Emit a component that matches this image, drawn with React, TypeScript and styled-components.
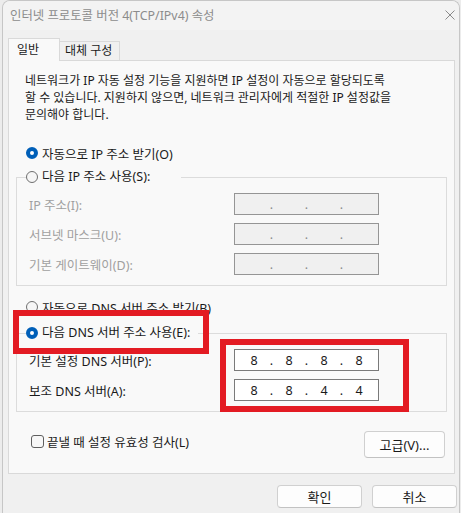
import React from 'react';
import styled, { createGlobalStyle } from 'styled-components';

const GlobalStyle = createGlobalStyle`
  html, body {
    margin: 0;
    padding: 0;
  }
  body {
    background: #ececec;
    font-family: "Noto Sans", "Noto Sans CJK KR", sans-serif;
    font-size: 12px;
    color: #1a1a1a;
  }
  * {
    box-sizing: border-box;
  }
`;

const Window = styled.div`
  margin-left: 2px;
  width: 458px;
  height: 513px;
  background: #f0f0f0;
  border: 1px solid #c6c6c6;
  border-bottom: none;
  border-radius: 8px 8px 0 0;
  overflow: hidden;
`;

const TitleBar = styled.div`
  height: 29px;
  display: flex;
  align-items: center;
  justify-content: space-between;
  padding: 0 4px 2px 7px;
  background: #f3f3f3;
  color: #8c8c8c;
  font-size: 12.4px;
  white-space: nowrap;
`;

const Body = styled.div`
  padding: 8px 4px 0 5px;
`;

const TabStrip = styled.div`
  display: flex;
  align-items: flex-end;
`;

const Tab = styled.div<{ $active?: boolean }>`
  position: relative;
  z-index: 1;
  height: ${p => (p.$active ? '23px' : '19px')};
  width: ${p => (p.$active ? '52px' : '60px')};
  margin-bottom: ${p => (p.$active ? '-1px' : '0')};
  padding: ${p => (p.$active ? '2px 0 0 8px' : '0 0 0 5px')};
  line-height: 18px;
  background: ${p => (p.$active ? '#f9f9f9' : '#f0f0f0')};
  border: 1px solid #d9d9d9;
  border-bottom: none;
  border-left: ${p => (p.$active ? '1px solid #d9d9d9' : 'none')};
  white-space: nowrap;
`;

const Panel = styled.div`
  position: relative;
  display: flex;
  flex-direction: column;
  background: #f9f9f9;
  border: 1px solid #d9d9d9;
  padding: 11px 7px 15px 7px;
  font-size: 12.5px;
`;

const Intro = styled.p`
  margin: 0 0 0 9px;
  font-size: 12px;
  line-height: 17px;
  white-space: nowrap;
`;

const RadioRow = styled.label<{ $top?: number }>`
  display: flex;
  align-items: center;
  gap: 4px;
  height: 18px;
  margin: ${p => p.$top ?? 0}px 0 0 10px;
  white-space: nowrap;
`;

const RadioDot = styled.span<{ $checked?: boolean }>`
  flex: none;
  width: 12px;
  height: 12px;
  border-radius: 50%;
  background: ${p => (p.$checked ? '#ffffff' : '#f6f6f6')};
  border: ${p => (p.$checked ? '4px solid #005fb8' : '1px solid #6f6f6f')};
`;

const Group = styled.fieldset<{ $top: number }>`
  margin: ${p => p.$top}px 0 0 0;
  min-width: 0;
  padding: 7px 67px 10px 12px;
  border: 1px solid #dcdcdc;
`;

const GroupLegend = styled.legend<{ $gap: number }>`
  margin-left: -3px;
  padding: 0 ${p => p.$gap}px 0 0;
  line-height: 18px;
`;

const LegendRadio = styled.span`
  display: flex;
  align-items: center;
  gap: 4px;
  height: 18px;
  white-space: nowrap;
`;

const Rows = styled.div`
  display: grid;
  grid-template-columns: 1fr 145px;
  row-gap: 8px;
  align-items: center;
`;

const FieldLabel = styled.span<{ $disabled?: boolean }>`
  color: ${p => (p.$disabled ? '#a0a0a0' : '#1a1a1a')};
  white-space: nowrap;
`;

const IpBox = styled.div<{ $disabled?: boolean }>`
  display: flex;
  align-items: center;
  width: 145px;
  height: 22px;
  padding-left: 4px;
  border: 1px solid ${p => (p.$disabled ? '#959595' : '#7a7a7a')};
  background: ${p => (p.$disabled ? '#f0f0f0' : '#ffffff')};
  color: ${p => (p.$disabled ? '#8a8a8a' : '#1a1a1a')};
  font-size: 12.5px;
`;

const Octet = styled.span`
  width: 30px;
  text-align: center;
`;

const Sep = styled.span`
  width: 5px;
  text-align: center;
`;

const OptionsRow = styled.div`
  display: flex;
  justify-content: space-between;
  align-items: flex-start;
  margin-top: 19px;
`;

const CheckRow = styled.label`
  display: flex;
  align-items: center;
  gap: 3px;
  height: 18px;
  margin: 1px 0 0 15px;
  white-space: nowrap;
`;

const CheckBox = styled.span`
  flex: none;
  width: 13px;
  height: 13px;
  border: 1px solid #5f5f5f;
  border-radius: 3px;
  background: #f7f7f7;
`;

const Button = styled.button<{ $w: number; $h: number }>`
  width: ${p => p.$w}px;
  height: ${p => p.$h}px;
  padding: 0;
  background: #fdfdfd;
  border: 1px solid #d0d0d0;
  border-bottom-color: #c2c2c2;
  border-radius: 4px;
  font-family: inherit;
  font-size: 13px;
  color: #1a1a1a;
`;

const AdvancedButton = styled(Button)`
  margin-right: 2px;
`;

const Footer = styled.div`
  display: flex;
  justify-content: flex-end;
  gap: 10px;
  padding-top: 11px;
  margin-right: -2px;
`;

const Highlight = styled.div<{ $x: number; $y: number; $w: number; $h: number }>`
  position: absolute;
  left: ${p => p.$x}px;
  top: ${p => p.$y}px;
  width: ${p => p.$w}px;
  height: ${p => p.$h}px;
  border: 6px solid #e31b23;
  pointer-events: none;
  z-index: 2;
`;

const CloseIcon = () => (
  <svg width="10" height="10" viewBox="0 0 10 10">
    <path d="M0.5 0.5L9.5 9.5M9.5 0.5L0.5 9.5" stroke="#8a8a8a" strokeWidth="1" fill="none" />
  </svg>
);

const IpField = ({ value, disabled }: { value?: string[]; disabled?: boolean }) => {
  const parts = value ?? ['', '', '', ''];
  return (
    <IpBox $disabled={disabled}>
      {parts.map((v, i) => (
        <React.Fragment key={i}>
          <Octet>{v}</Octet>
          {i < 3 && <Sep>.</Sep>}
        </React.Fragment>
      ))}
    </IpBox>
  );
};

export default function App() {
  return (
    <>
      <GlobalStyle />
      <Window>
        <TitleBar>
          <span>인터넷 프로토콜 버전 4(TCP/IPv4) 속성</span>
          <CloseIcon />
        </TitleBar>
        <Body>
          <TabStrip>
            <Tab $active>일반</Tab>
            <Tab>대체 구성</Tab>
          </TabStrip>
          <Panel>
            <Intro>
              네트워크가 IP 자동 설정 기능을 지원하면 IP 설정이 자동으로 할당되도록
              <br />
              할 수 있습니다. 지원하지 않으면, 네트워크 관리자에게 적절한 IP 설정값을
              <br />
              문의해야 합니다.
            </Intro>

            <RadioRow $top={21}>
              <RadioDot $checked />
              자동으로 IP 주소 받기(O)
            </RadioRow>

            <Group $top={6}>
              <GroupLegend $gap={31}>
                <LegendRadio>
                  <RadioDot />
                  다음 IP 주소 사용(S):
                </LegendRadio>
              </GroupLegend>
              <Rows>
                <FieldLabel $disabled>IP 주소(I):</FieldLabel>
                <IpField disabled />
                <FieldLabel $disabled>서브넷 마스크(U):</FieldLabel>
                <IpField disabled />
                <FieldLabel $disabled>기본 게이트웨이(D):</FieldLabel>
                <IpField disabled />
              </Rows>
            </Group>

            <RadioRow $top={12}>
              <RadioDot />
              자동으로 DNS 서버 주소 받기(B)
            </RadioRow>

            <Group $top={8}>
              <GroupLegend $gap={8}>
                <LegendRadio>
                  <RadioDot $checked />
                  다음 DNS 서버 주소 사용(E):
                </LegendRadio>
              </GroupLegend>
              <Rows>
                <FieldLabel>기본 설정 DNS 서버(P):</FieldLabel>
                <IpField value={['8', '8', '8', '8']} />
                <FieldLabel>보조 DNS 서버(A):</FieldLabel>
                <IpField value={['8', '8', '4', '4']} />
              </Rows>
            </Group>

            <OptionsRow>
              <CheckRow>
                <CheckBox />
                끝낼 때 설정 유효성 검사(L)
              </CheckRow>
              <AdvancedButton $w={81} $h={27}>고급(V)...</AdvancedButton>
            </OptionsRow>

            <Highlight $x={4} $y={249} $w={196} $h={44} />
            <Highlight $x={211} $y={278} $w={189} $h={73} />
          </Panel>
          <Footer>
            <Button $w={85} $h={23}>확인</Button>
            <Button $w={85} $h={23}>취소</Button>
          </Footer>
        </Body>
      </Window>
    </>
  );
}
